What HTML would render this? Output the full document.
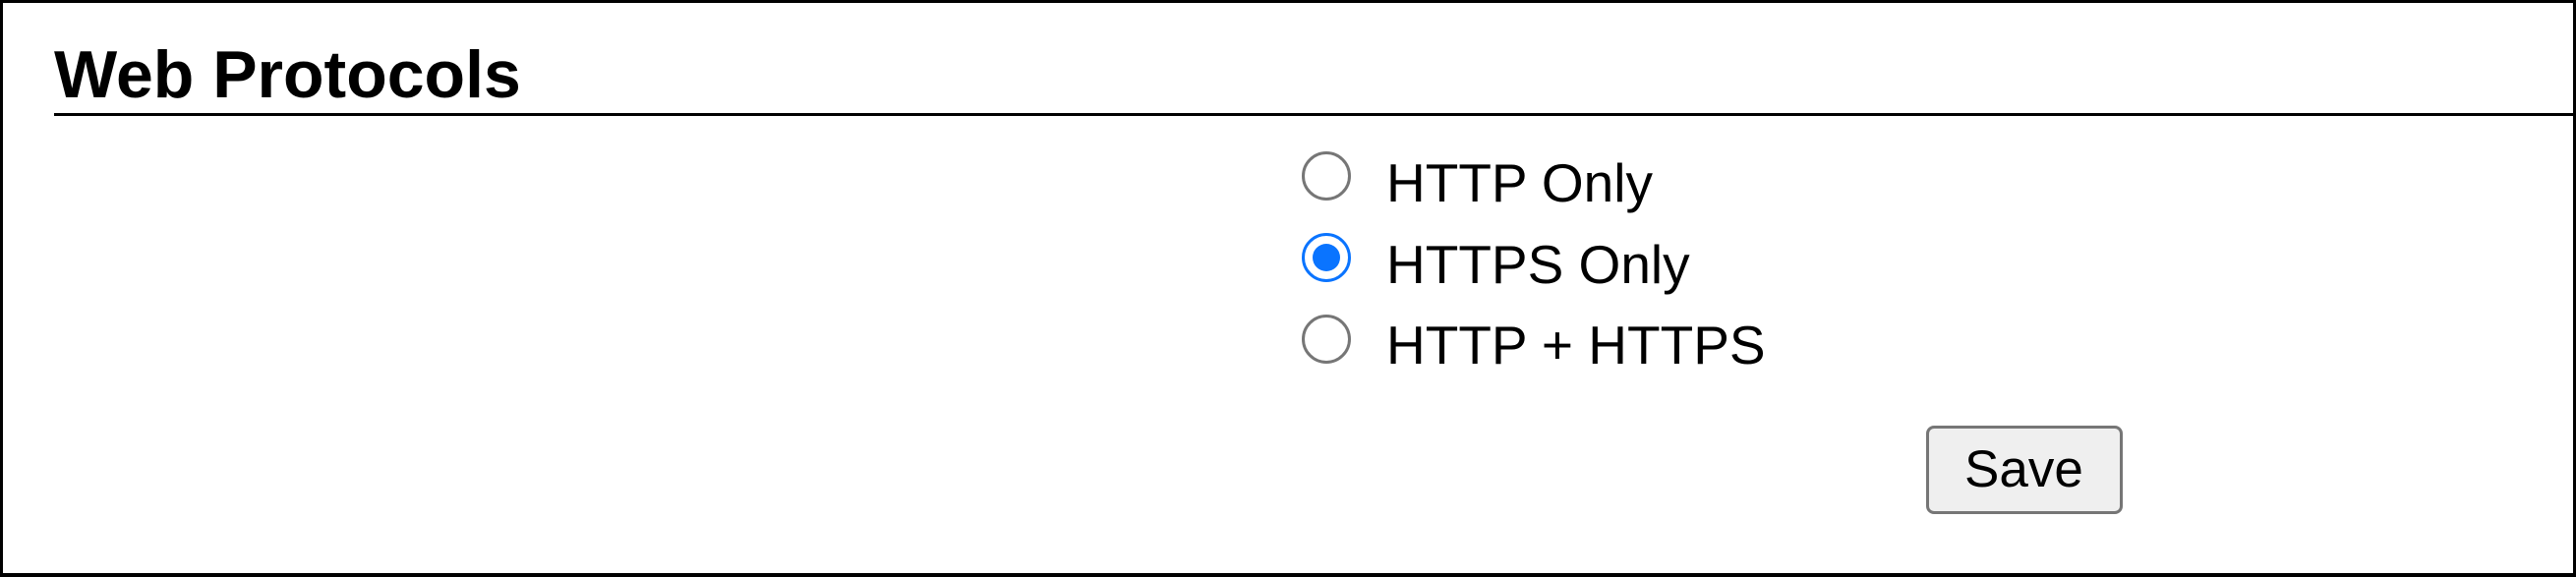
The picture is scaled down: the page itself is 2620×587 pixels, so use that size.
<!DOCTYPE html>
<html><head><style>
html,body{margin:0;padding:0;}
body{width:2620px;height:587px;position:relative;background:#fff;font-family:"Liberation Sans",Arial,sans-serif;overflow:hidden;}
.frame{position:absolute;left:0;top:0;width:2614px;height:580px;border:3px solid #000;border-bottom-width:4px;}
.h{position:absolute;left:55px;top:76px;font-weight:bold;font-size:68px;line-height:0;color:#000;}
.rule{position:absolute;left:55px;top:115px;width:2562px;height:3px;background:#000;}
.r{position:absolute;left:1324px;width:44px;height:44px;border:3px solid #767676;border-radius:50%;box-sizing:content-box;}
.r.on{border-color:#0a74ff;}
.r.on::after{content:"";position:absolute;left:8px;top:8px;width:28px;height:28px;border-radius:50%;background:#0a74ff;}
.t{position:absolute;left:1410px;font-size:55px;line-height:0;color:#000;}
.btn{position:absolute;left:1959px;top:433px;width:200px;height:90px;box-sizing:border-box;border:3px solid #767676;border-radius:8px;background:#efefef;}
.bt{position:absolute;left:1998px;top:478px;font-size:53px;line-height:0;color:#000;}
</style></head><body>
<div class="frame"></div>
<div class="h">Web Protocols</div>
<div class="rule"></div>
<div class="r" style="top:154px"></div><div class="t" style="top:186px">HTTP Only</div>
<div class="r on" style="top:237px"></div><div class="t" style="top:269px">HTTPS Only</div>
<div class="r" style="top:320px"></div><div class="t" style="top:351px">HTTP + HTTPS</div>
<div class="btn"></div><div class="bt">Save</div>
</body></html>
